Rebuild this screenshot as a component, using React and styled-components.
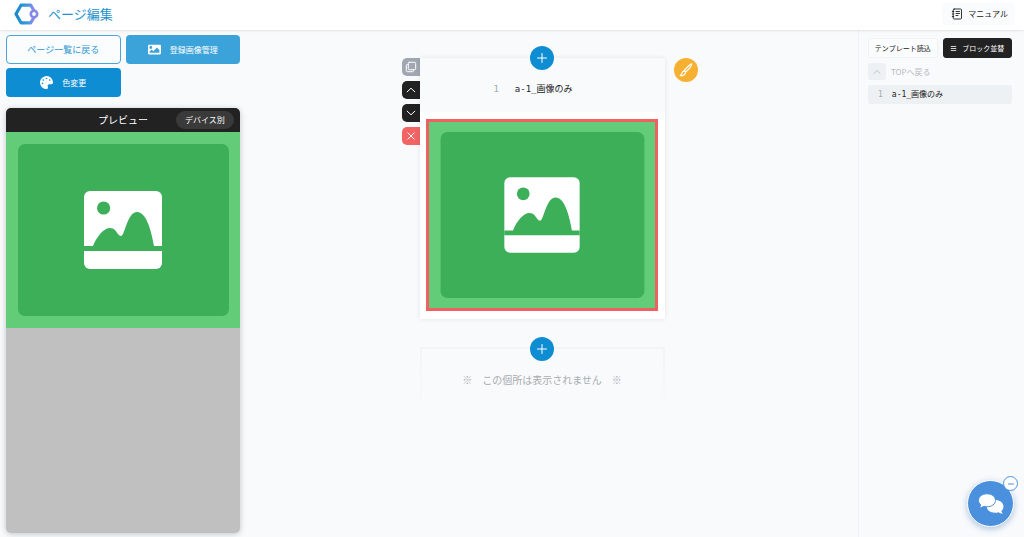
import React from 'react';
import styled, { createGlobalStyle, css } from 'styled-components';
import { FaImage, FaPalette } from 'react-icons/fa';

const GlobalStyle = createGlobalStyle`
    * {
        box-sizing: border-box;
    }

    body {
        margin: 0;
        background: #f8fafc;
        color: #222;
        font-family: "Noto Sans CJK JP", sans-serif;
        font-size: 8px;
        line-height: 12px;
    }

    button {
        margin: 0;
        padding: 0;
        border: none;
        font: inherit;
        color: inherit;
        cursor: pointer;
    }

    a {
        color: inherit;
        text-decoration: none;
    }

    svg {
        display: block;
        flex-shrink: 0;
    }
`;

const Page = styled.div`
    display: flex;
    flex-direction: column;
    height: 100vh;
`;

const Header = styled.header`
    display: flex;
    align-items: center;
    justify-content: space-between;
    height: 30px;
    padding: 0 9px 2px 14px;
    flex-shrink: 0;
    background: #fff;
    box-shadow: 0 0 3px rgba(0, 0, 0, 0.18);
    z-index: 1;
`;

const Brand = styled.div`
    display: flex;
    align-items: center;
    gap: 9px;
`;

const Title = styled.h1`
    margin: 0;
    color: #2492d0;
    font-size: 13px;
    line-height: 20px;
    font-weight: 400;
`;

const ManualLink = styled.a`
    display: flex;
    align-items: center;
    gap: 5px;
    height: 22px;
    padding: 0 7px 0 9px;
    border-radius: 4px;
    background: #fafbfc;
`;

const Body = styled.div`
    display: flex;
    flex: 1;
    min-height: 0;
`;

const SidePanel = styled.section`
    display: flex;
    flex-direction: column;
    gap: 11px;
    width: 242px;
    padding: 5px 2px 4px 6px;
    flex-shrink: 0;
`;

const ActionGrid = styled.div`
    display: grid;
    grid-template-columns: 1fr 1fr;
    gap: 4px 5px;
`;

const ActionButton = styled.button`
    display: flex;
    align-items: center;
    justify-content: center;
    gap: 9px;
    height: 29px;
    border-radius: 4px;
    background: ${props => (props.$light ? '#3ba3da' : '#0f8dd3')};
    color: #fff;

    ${props => props.$outline && css`
        border: 1px solid #4aa6da;
        background: #fafcfe;
        color: #2f97d2;
        font-size: 9px;
    `}
`;

const Preview = styled.div`
    display: flex;
    flex-direction: column;
    flex: 1;
    overflow: hidden;
    border-radius: 5px;
    background: #c0c0c0;
    box-shadow: 0 1px 6px rgba(0, 0, 0, 0.22);
`;

const PreviewBar = styled.div`
    display: grid;
    grid-template-columns: 1fr auto 1fr;
    align-items: center;
    height: 24px;
    padding: 0 6px;
    flex-shrink: 0;
    background: #222;
    color: #fff;
`;

const PreviewTitle = styled.h2`
    grid-column: 2;
    margin: 0;
    font-size: 10px;
    line-height: 16px;
    font-weight: 400;
`;

const DeviceButton = styled.button`
    justify-self: end;
    width: 58px;
    height: 18px;
    border-radius: 9px;
    background: #3a3a3a;
    color: #fff;
`;

const Canvas = styled.main`
    display: flex;
    flex: 1;
    flex-direction: column;
    align-items: center;
    gap: 28px;
    padding-top: 28px;
    overflow: hidden;
`;

const BlockRow = styled.div`
    display: grid;
    grid-template-columns: 18px 245px 24px;
    align-items: start;
    padding-right: 10px;
`;

const Tools = styled.div`
    display: flex;
    flex-direction: column;
    gap: 5px;
`;

const ToolButton = styled.button`
    display: grid;
    place-items: center;
    width: 18px;
    height: 18px;
    border-radius: 5px 0 0 5px;
    background: ${props => props.$color || '#222'};
`;

const Card = styled.article`
    grid-column: 2;
    position: relative;
    background: #fff;
    box-shadow: 0 0 5px rgba(0, 0, 0, 0.09);
`;

const EmptyCard = styled(Card)`
    height: 66px;
    padding-top: 23px;
    background: #f8fafc;
    box-shadow: none;
    border: 2px solid;
    border-image: linear-gradient(#f2f4f6, #f8fafc) 1;
    color: #a9acaf;
    font-size: 10px;
    line-height: 16px;
    text-align: center;
`;

const AddButton = styled.button`
    position: absolute;
    top: 0;
    left: 50%;
    display: grid;
    place-items: center;
    width: 24px;
    height: 24px;
    border-radius: 50%;
    background: #0f8dd3;
    transform: translate(-50%, -50%);
`;

const CardHead = styled.div`
    display: flex;
    align-items: center;
    justify-content: center;
    gap: 16px;
    height: 54px;
    padding: 8px 18px 0 0;
    background: #f8fafc;
    font-family: "DejaVu Sans Mono", "Noto Sans CJK JP", monospace;
    font-size: 9px;
`;

const BlockNumber = styled.span`
    color: #a5a9ad;
`;

const CardBody = styled.div`
    padding: 7px 7px 8px 6px;
`;

const Selected = styled.div`
    height: 192px;
    border: 3px solid #f06060;
`;

const BrushButton = styled.button`
    display: grid;
    place-items: center;
    width: 24px;
    height: 24px;
    margin-left: 9px;
    border-radius: 50%;
    background: #f7b032;
`;

const Aside = styled.aside`
    display: flex;
    flex-direction: column;
    gap: 5px;
    width: 166px;
    padding: 8px 12px 0 9px;
    flex-shrink: 0;
    border-left: 1px solid #eff2f4;
`;

const AsideButtons = styled.div`
    display: grid;
    grid-template-columns: 1fr 1fr;
    gap: 5px;
`;

const AsideButton = styled.button`
    display: flex;
    align-items: center;
    justify-content: center;
    gap: 5px;
    height: 20px;
    border: 1px solid ${props => (props.$dark ? '#222' : '#f0f2f4')};
    border-radius: 3px;
    background: ${props => (props.$dark ? '#222' : '#fbfcfd')};
    color: ${props => (props.$dark ? '#fff' : '#222')};
    font-size: 7px;
    white-space: nowrap;
`;

const TopLink = styled.a`
    display: flex;
    align-items: center;
    gap: 5px;
    color: #b8bcbf;
`;

const TopIcon = styled.span`
    display: grid;
    place-items: center;
    width: 18px;
    height: 17px;
    border-radius: 3px;
    background: #edf1f3;
`;

const BlockLink = styled.a`
    display: flex;
    align-items: center;
    gap: 9px;
    height: 19px;
    padding: 0 10px;
    border-radius: 3px;
    background: #edf1f3;
    font-family: "DejaVu Sans Mono", "Noto Sans CJK JP", monospace;
`;

const ChatArea = styled.div`
    position: fixed;
    right: 10px;
    bottom: 10px;
    width: 47px;
    height: 47px;
    z-index: 2;
`;

const ChatButton = styled.button`
    display: grid;
    place-items: center;
    width: 100%;
    height: 100%;
    border: 1px solid #fff;
    border-radius: 50%;
    background: #4a90dd;
    box-shadow: 0 2px 6px rgba(60, 110, 170, 0.4);
`;

const ChatClose = styled.button`
    position: absolute;
    top: -4px;
    right: -4px;
    display: grid;
    place-items: center;
    width: 15px;
    height: 15px;
    border: 1px solid #4a90dd;
    border-radius: 50%;
    background: #fff;
`;

const PictureSvg = styled.svg`
    width: 100%;
    height: ${props => (props.$fill ? '100%' : 'auto')};
`;

// Placeholder shown where a block has no image yet
function Picture({ fill }) {
    return (
        <PictureSvg $fill={fill} viewBox="0 0 234 196" preserveAspectRatio="xMidYMid slice" role="img" aria-label="画像">
            <rect width="234" height="196" fill="#62cc79" />
            <rect x="12" y="12" width="211" height="172" rx="7" fill="#3caf58" />
            <rect x="78" y="59" width="78" height="78" rx="6" fill="#fff" />
            <circle cx="97.600" cy="76" r="6.600" fill="#3caf58" />
            <path
                d="M78 114h9C91 104 98 96 104 96c4 0 6 3 8 6q3 4 5 0c3-6 6-22 14-22 9 0 14 17 17 34h8v5H78z"
                fill="#3caf58"
            />
        </PictureSvg>
    );
}

function LineIcon({ d, size = 12, color = '#fff', width = 1 }) {
    return (
        <svg width={size} height={size} viewBox="0 0 12 12" fill="none" stroke={color}
            strokeWidth={width} strokeLinecap="round" strokeLinejoin="round" aria-hidden="true">
            <path d={d} />
        </svg>
    );
}

const icons = {
    plus: 'M6 1.500v9M1.500 6h9',
    minus: 'M3.500 6h5',
    up: 'M2.200 7.800 6 4.200 9.800 7.800',
    down: 'M2.200 4.200 6 7.800l3.800-3.600',
    close: 'M2.800 2.800l6.400 6.400M9.200 2.800L2.800 9.200',
    copy: 'M4.300 1.300h5.400q1 0 1 1v5.400q0 1-1 1H4.300q-1 0-1-1V2.300q0-1 1-1zM3.300 3.500h-1q-1 0-1 1v5.200q0 1 1 1h5.200q1 0 1-1v-1',
    menu: 'M2 2.500h8M2 6h8M2 9.500h8',
    brush: 'M11 .8C9.500 1 5.500 5 4.400 6.700l1.100 1.100C7.500 6.500 11.200 2.300 11 .8zM4.400 6.700C2.500 7 2.700 9.300 1 10.900c2.300.2 4.800-.9 4.500-3.100',
    note: 'M3.200 1h6.300q1 0 1 1v8q0 1-1 1H3.200q-1 0-1-1V2q0-1 1-1zM1.300 3.500h1.500M1.300 6h1.500M1.300 8.500h1.500M5 3.500h3.500M5 5.500h3.500M5 7.500h2',
};

function Logo() {
    return (
        <svg width="25" height="22" viewBox="0 0 25 22" fill="none" aria-hidden="true">
            <defs>
                <linearGradient id="logo" x1="0" y1="0" x2="1" y2="0">
                    <stop offset="0" stopColor="#1688cb" />
                    <stop offset="0.600" stopColor="#369bde" />
                    <stop offset="1" stopColor="#9a86ef" />
                </linearGradient>
            </defs>
            <path d="M20 7.500 16.700 2.200H7L2 11l5 8.800h9.700L20 14.500" stroke="url(#logo)" strokeWidth="3.200" strokeLinejoin="round" />
            <circle cx="20" cy="11" r="3.200" stroke="#8189e9" strokeWidth="2.600" />
        </svg>
    );
}

function ChatIcon() {
    return (
        <svg width="26" height="22" viewBox="0 0 26 22" aria-hidden="true">
            <path
                d="M17 7c4.800 0 8.500 2.700 8.500 6.500 0 1.800-.8 3.300-2.100 4.400.2 1.200.9 2 1.800 2.700-1.900.1-3.500-.5-4.700-1.400-1.100.4-2.200.5-3.500.5-4.700 0-8.300-2.600-8.300-6.200C8.700 9.700 12.300 7 17 7z"
                fill="#fff"
            />
            <path
                d="M9 .8c4.800 0 8.500 2.800 8.500 6.500S13.800 13.800 9 13.800c-1.200 0-2.300-.2-3.300-.5-1.200.9-2.800 1.500-4.700 1.400.9-.8 1.500-1.600 1.700-2.800C1.300 10.700.5 9.100.5 7.300.5 3.600 4.200.8 9 .8z"
                fill="#fff" stroke="#4a90dd"
            />
        </svg>
    );
}

function App() {
    return (
        <Page>
            <GlobalStyle />
            <Header>
                <Brand>
                    <Logo />
                    <Title>ページ編集</Title>
                </Brand>
                <ManualLink href="#manual">
                    <LineIcon d={icons.note} color="#333" />
                    マニュアル
                </ManualLink>
            </Header>
            <Body>
                <SidePanel>
                    <ActionGrid>
                        <ActionButton $outline>ページ一覧に戻る</ActionButton>
                        <ActionButton $light><FaImage size={13} />登録画像管理</ActionButton>
                        <ActionButton><FaPalette size={13} />色変更</ActionButton>
                    </ActionGrid>
                    <Preview>
                        <PreviewBar>
                            <PreviewTitle>プレビュー</PreviewTitle>
                            <DeviceButton>デバイス別</DeviceButton>
                        </PreviewBar>
                        <Picture />
                    </Preview>
                </SidePanel>
                <Canvas>
                    <BlockRow>
                        <Tools>
                            <ToolButton $color="#a0a7b3" aria-label="複製"><LineIcon d={icons.copy} /></ToolButton>
                            <ToolButton aria-label="上へ"><LineIcon d={icons.up} /></ToolButton>
                            <ToolButton aria-label="下へ"><LineIcon d={icons.down} /></ToolButton>
                            <ToolButton $color="#f26464" aria-label="削除"><LineIcon d={icons.close} /></ToolButton>
                        </Tools>
                        <Card>
                            <CardHead>
                                <BlockNumber>1</BlockNumber>
                                <span>a-1_画像のみ</span>
                            </CardHead>
                            <CardBody>
                                <Selected><Picture fill /></Selected>
                            </CardBody>
                            <AddButton aria-label="追加"><LineIcon d={icons.plus} /></AddButton>
                        </Card>
                        <BrushButton aria-label="デザイン"><LineIcon d={icons.brush} size={14} /></BrushButton>
                    </BlockRow>
                    <BlockRow>
                        <EmptyCard>
                            ※　この個所は表示されません　※
                            <AddButton aria-label="追加"><LineIcon d={icons.plus} /></AddButton>
                        </EmptyCard>
                    </BlockRow>
                </Canvas>
                <Aside>
                    <AsideButtons>
                        <AsideButton>テンプレート読込</AsideButton>
                        <AsideButton $dark><LineIcon d={icons.menu} size={7} width={1.4} />ブロック並替</AsideButton>
                    </AsideButtons>
                    <TopLink href="#top">
                        <TopIcon><LineIcon d={icons.up} size={10} color="#b8bcbf" /></TopIcon>
                        TOPへ戻る
                    </TopLink>
                    <BlockLink href="#block-1">
                        <BlockNumber>1</BlockNumber>
                        a-1_画像のみ
                    </BlockLink>
                </Aside>
            </Body>
            <ChatArea>
                <ChatButton aria-label="チャット"><ChatIcon /></ChatButton>
                <ChatClose aria-label="閉じる"><LineIcon d={icons.minus} color="#4a90dd" /></ChatClose>
            </ChatArea>
        </Page>
    );
}

export default App;
